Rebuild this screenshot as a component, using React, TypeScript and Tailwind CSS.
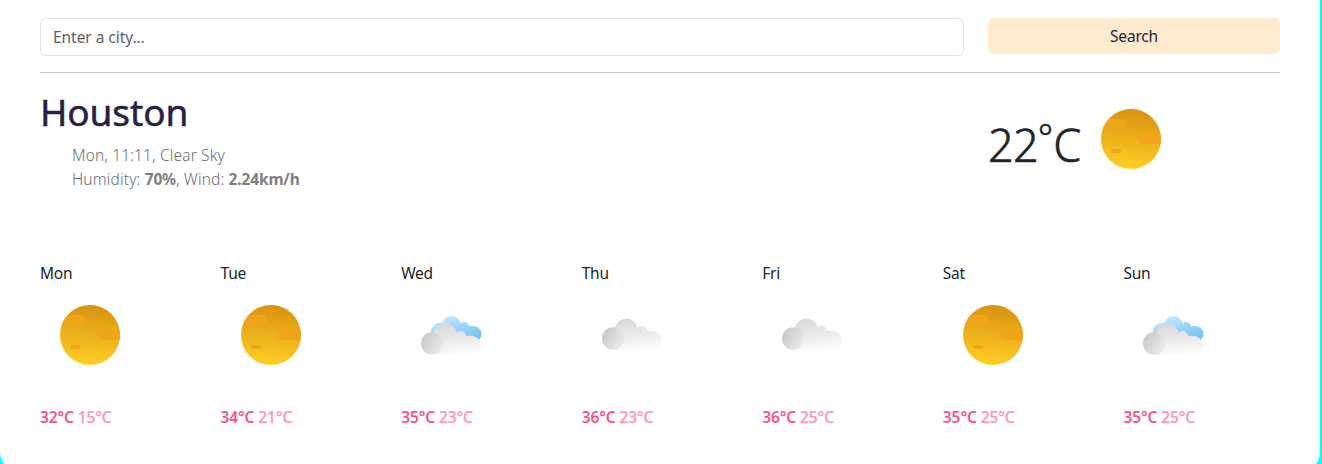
import React, { useId } from "react";

type Condition = "clear" | "few-clouds" | "cloudy";

function SunIcon() {
  const id = useId();
  return (
    <svg width="100" height="100" viewBox="0 0 100 100" className="block shrink-0" aria-hidden="true">
      <defs>
        <linearGradient id={`${id}g`} x1="0.55" y1="0" x2="0.45" y2="1">
          <stop offset="0" stopColor="#d8920f" />
          <stop offset="1" stopColor="#ffcf25" />
        </linearGradient>
        <clipPath id={`${id}c`}>
          <circle cx="50" cy="50" r="30" />
        </clipPath>
      </defs>
      <circle cx="50" cy="50" r="30" fill={`url(#${id}g)`} />
      <g clipPath={`url(#${id}c)`} fill="#f0a418">
        <rect x="10" y="30" width="36" height="10" rx="5" />
        <rect x="57" y="45" width="36" height="10" rx="5" />
        <rect x="30" y="60" width="10" height="4" rx="2" />
      </g>
    </svg>
  );
}

function CloudIcon({ withSky }: { withSky: boolean }) {
  const id = useId();
  return (
    <svg width="100" height="100" viewBox="0 0 100 100" className="block shrink-0" aria-hidden="true">
      <defs>
        <linearGradient id={`${id}b`} gradientUnits="userSpaceOnUse" x1="48" y1="34" x2="51" y2="65">
          <stop offset="0" stopColor="#d9d9d9" />
          <stop offset="1" stopColor="#fcfcfc" />
        </linearGradient>
        <linearGradient id={`${id}l`} x1="0.05" y1="0.2" x2="0.95" y2="0.75">
          <stop offset="0" stopColor="#c8c8c8" />
          <stop offset="1" stopColor="#ebebeb" />
        </linearGradient>
        <linearGradient id={`${id}s`} gradientUnits="userSpaceOnUse" x1="50" y1="31" x2="58" y2="57">
          <stop offset="0" stopColor="#c0e6ff" />
          <stop offset="1" stopColor="#74c4f4" />
        </linearGradient>
      </defs>
      {withSky && (
        <g fill={`url(#${id}s)`}>
          <circle cx="39" cy="47" r="9.2" />
          <circle cx="50.5" cy="40.5" r="9.5" />
          <circle cx="63" cy="41.2" r="4.3" />
          <path d="M39 42H56L60 38H66L68 41H72.5A8 8 0 0 1 72.5 57H39Z" />
        </g>
      )}
      <g transform={withSky ? "translate(0 5)" : undefined}>
        <g fill={`url(#${id}b)`}>
          <circle cx="44.3" cy="45.5" r="11.8" />
          <path d="M31 51L44 46H54.8C55 42.5 57 40.9 59.8 40.9C62.6 40.9 64.6 42.5 64.8 45.7H70A9.65 9.65 0 0 1 70 65H31Z" />
        </g>
        <circle cx="31.2" cy="53.5" r="11.2" fill={`url(#${id}l)`} />
      </g>
    </svg>
  );
}

function WeatherIcon({ condition }: { condition: Condition }) {
  return condition === "clear" ? <SunIcon /> : <CloudIcon withSky={condition === "few-clouds"} />;
}

const forecast: { day: string; max: number; min: number; condition: Condition }[] = [
  { day: "Mon", max: 32, min: 15, condition: "clear" },
  { day: "Tue", max: 34, min: 21, condition: "clear" },
  { day: "Wed", max: 35, min: 23, condition: "few-clouds" },
  { day: "Thu", max: 36, min: 23, condition: "cloudy" },
  { day: "Fri", max: 36, min: 25, condition: "cloudy" },
  { day: "Sat", max: 35, min: 25, condition: "clear" },
  { day: "Sun", max: 35, min: 25, condition: "few-clouds" },
];

export default function App() {
  return (
    <div className="h-[464px] overflow-hidden bg-[#00ffff] pr-0.5 font-['Noto_Sans',sans-serif] text-[15.5px] leading-6 text-[#212529]">
      <main className="h-[472px] rounded-b-[20px] bg-white pr-10 pl-10 pt-[18px]">
        <form className="flex items-start gap-6" onSubmit={(e) => e.preventDefault()}>
          <input
            type="search"
            placeholder="Enter a city..."
            className="h-[38px] w-[924px] rounded-md border border-[#dee2e6] bg-white px-3 tracking-[-0.05px] placeholder:text-[#5d6268]"
          />
          <button
            type="submit"
            className="h-9 flex-1 rounded-md bg-[#ffebcd] tracking-[-0.2px] text-[#272144]"
          >
            Search
          </button>
        </form>
        <hr className="mt-4 border-[#c7c8c9]" />

        <section className="flex h-[188px] gap-6">
          <div className="w-[924px] pt-[15px]">
            <h1 className="text-[37px] leading-[48px] tracking-[-0.1px] text-[#272144] [-webkit-text-stroke:0.5px_#272144]">
              Houston
            </h1>
            <div className="mt-[7px] pl-8 font-light tracking-[0.15px] text-[#6c6c6c]">
              <p>Mon, 11:11, Clear Sky</p>
              <p>
                Humidity: <strong className="font-bold tracking-[-0.15px] text-[#808080]">70%</strong>, Wind:{" "}
                <strong className="font-bold tracking-[-0.15px] text-[#808080]">2.24km/h</strong>
              </p>
            </div>
          </div>
          <div className="flex flex-1 items-start pt-4">
            <p className="mt-5 flex h-[72px] w-[93px] text-[45px] leading-[72px] font-light whitespace-nowrap [-webkit-text-stroke:0.6px_#212529]">
              <span className="tracking-[-0.8px]">22</span>
              <span className="-mt-[7px] text-[36px]">°</span>
              <span>C</span>
            </p>
            <SunIcon />
          </div>
        </section>

        <section className="grid grid-cols-7 gap-6">
          {forecast.map(({ day, max, min, condition }) => (
            <article key={day}>
              <h2 className="tracking-[-0.25px]">{day}</h2>
              <WeatherIcon condition={condition} />
              <p className="mt-5 tracking-[-0.1px] whitespace-nowrap text-[#f65488]">
                <span className="font-semibold">{max}°C</span>{" "}
                <span className="font-medium text-[#fa98b8] [-webkit-text-stroke:0.25px_#fa98b8]">{min}°C</span>
              </p>
            </article>
          ))}
        </section>
      </main>
    </div>
  );
}
